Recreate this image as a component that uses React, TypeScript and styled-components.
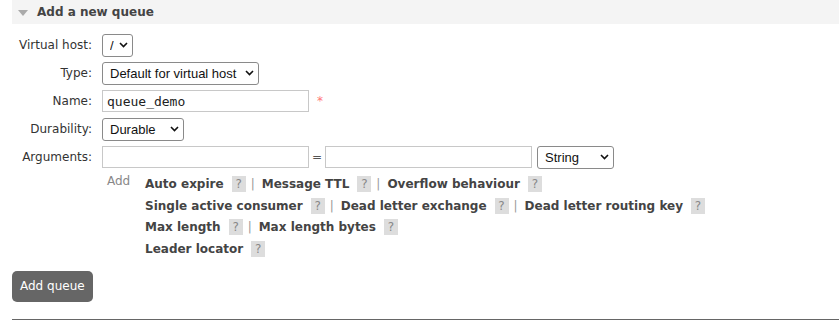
import React from 'react';
import styled, { createGlobalStyle } from 'styled-components';

const GlobalStyle = createGlobalStyle`
  body {
    margin: 0;
    background: #fff;
    font-family: 'DejaVu Sans', Verdana, sans-serif;
    font-size: 12px;
    color: #444;
  }
`;

const helpRows: string[][] = [
  ['Auto expire', 'Message TTL', 'Overflow behaviour'],
  ['Single active consumer', 'Dead letter exchange', 'Dead letter routing key'],
  ['Max length', 'Max length bytes'],
  ['Leader locator'],
];

function Chevron() {
  return (
    <svg width="9" height="6" viewBox="0 0 9 6">
      <path d="M1 1 L4.5 4.5 L8 1" fill="none" stroke="#111" strokeWidth="1.6" />
    </svg>
  );
}

function Select({ value, width }: { value: string; width: number }) {
  return (
    <SelectWrap>
      <NativeSelect $width={width} defaultValue={value}>
        <option>{value}</option>
      </NativeSelect>
      <ChevronSlot>
        <Chevron />
      </ChevronSlot>
    </SelectWrap>
  );
}

function App() {
  return (
    <Page>
      <GlobalStyle />
      <SectionHeader>
        <Triangle />
        Add a new queue
      </SectionHeader>
      <Form>
        <Label>Virtual host:</Label>
        <Field>
          <Select value="/" width={31} />
        </Field>
        <Label>Type:</Label>
        <Field>
          <Select value="Default for virtual host" width={157} />
        </Field>
        <Label>Name:</Label>
        <Field>
          <TextInput $mono defaultValue="queue_demo" />
          <Required>*</Required>
        </Field>
        <Label>Durability:</Label>
        <Field>
          <Select value="Durable" width={82} />
        </Field>
        <Label>Arguments:</Label>
        <Field>
          <TextInput />
          <Equals>=</Equals>
          <TextInput />
          <Spacer />
          <Select value="String" width={77} />
        </Field>
        <span />
        <HelpArea>
          <AddLink>Add</AddLink>
          <HelpLines>
            {helpRows.map((row, i) => (
              <HelpLine key={i}>
                {row.map((item, j) => (
                  <React.Fragment key={item}>
                    {j > 0 && <Sep>|</Sep>}
                    <HelpLink>{item}</HelpLink>
                    <Badge>?</Badge>
                  </React.Fragment>
                ))}
              </HelpLine>
            ))}
          </HelpLines>
        </HelpArea>
      </Form>
      <SubmitButton>Add queue</SubmitButton>
      <Rule />
    </Page>
  );
}

const Page = styled.div`
  padding-left: 12px;
  width: 827px;
`;

const SectionHeader = styled.h2`
  margin: 0;
  height: 24px;
  display: flex;
  align-items: center;
  gap: 9px;
  padding-left: 6px;
  background: #f4f4f4;
  font-size: 12px;
  font-weight: bold;
  color: #444;
`;

const Triangle = styled.span`
  width: 0;
  height: 0;
  border-left: 5px solid transparent;
  border-right: 5px solid transparent;
  border-top: 6px solid #aaa;
  margin-top: 1px;
`;

const Form = styled.div`
  display: grid;
  grid-template-columns: 80px 1fr;
  grid-template-rows: repeat(5, 28px) auto;
  column-gap: 10px;
  margin-top: 7px;
`;

const Label = styled.div`
  display: flex;
  align-items: center;
  justify-content: flex-end;
  color: #333;
`;

const Field = styled.div`
  display: flex;
  align-items: center;
`;

const SelectWrap = styled.span`
  position: relative;
  display: inline-flex;
`;

const NativeSelect = styled.select<{ $width: number }>`
  appearance: none;
  width: ${(p) => p.$width}px;
  height: 23px;
  padding: 0 18px 0 7px;
  border: 1px solid #8a8a8a;
  border-radius: 3px;
  background: #fff;
  font-family: 'Liberation Sans', Arial, sans-serif;
  font-size: 13px;
  color: #111;
`;

const ChevronSlot = styled.span`
  position: absolute;
  right: 5px;
  top: 8px;
  display: flex;
  pointer-events: none;
`;

const TextInput = styled.input<{ $mono?: boolean }>`
  width: 207px;
  height: 22px;
  box-sizing: border-box;
  padding: 0 4px;
  border: 1px solid #c8c8c8;
  font-family: ${(p) => (p.$mono ? "'DejaVu Sans Mono', Menlo, monospace" : "'DejaVu Sans', sans-serif")};
  font-size: 13px;
  color: #222;
  outline: none;
`;

const Required = styled.span`
  margin-left: 8px;
  color: #f77;
  font-size: 12px;
`;

const Equals = styled.span`
  margin: 0 3px;
  color: #555;
`;

const Spacer = styled.span`
  width: 5px;
`;

const HelpArea = styled.div`
  display: flex;
  padding-left: 5px;
  padding-top: 2px;
`;

const AddLink = styled.span`
  width: 38px;
  line-height: 16px;
  color: #888;
`;

const HelpLines = styled.div`
  display: flex;
  flex-direction: column;
`;

const HelpLine = styled.div`
  display: flex;
  align-items: center;
  flex-shrink: 0;
  height: 21.7px;
`;

const HelpLink = styled.span`
  font-weight: bold;
  color: #444;
`;

const Badge = styled.span`
  display: inline-block;
  width: 14px;
  height: 16px;
  line-height: 16px;
  margin-left: 8px;
  text-align: center;
  background: #ddd;
  color: #888;
`;

const Sep = styled.span`
  margin: 0 7px 0 5px;
  color: #999;
`;

const SubmitButton = styled.button`
  display: block;
  margin-top: 11px;
  height: 31px;
  padding: 0 8px;
  border: none;
  border-radius: 5px;
  background: #666;
  color: #fff;
  font-family: 'DejaVu Sans', Verdana, sans-serif;
  font-size: 12px;
`;

const Rule = styled.hr`
  margin: 17px 0 0;
  border: none;
  border-top: 1px solid #666;
`;

export default App;
